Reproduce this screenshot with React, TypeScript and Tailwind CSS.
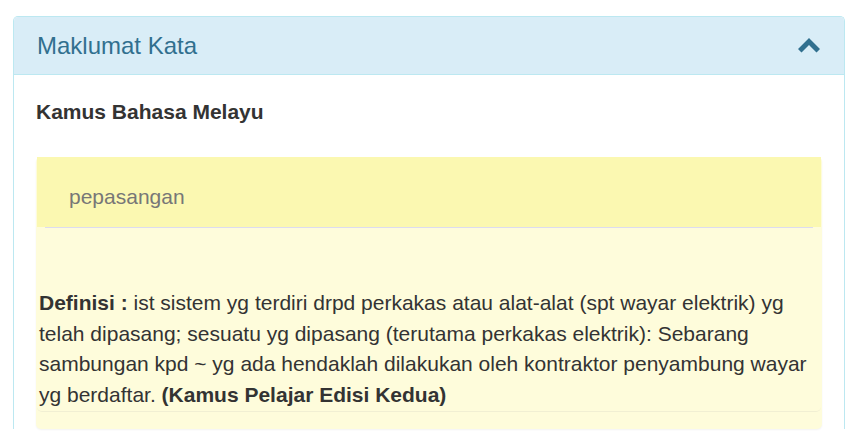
const ChevronUpIcon = () => (
  <svg width="22" height="15" viewBox="0 0 22 15" className="fill-[#31708f]">
    <polygon points="0,11 11,0 22,11 18.5,14.5 11,7 3.5,14.5" />
  </svg>
);

const App = () => {
  return (
    <div className="min-h-screen bg-white pl-[13px] pr-[10px] pt-[16px] font-['Liberation_Sans',Arial,sans-serif] text-[#333333]">
      <div className="rounded-t-[5px] border border-b-0 border-[#bce8f1] bg-white">
        <div className="flex h-[58px] items-center justify-between rounded-t-[4px] border-b border-[#bce8f1] bg-[#d9edf7] pl-[23px] pr-[24px] text-[#31708f]">
          <h3 className="text-[24px] leading-none">Maklumat Kata</h3>
          <ChevronUpIcon />
        </div>

        <div className="px-[22px] pt-[24px]">
          <h4 className="text-[21px] font-bold leading-[26px]">Kamus Bahasa Melayu</h4>

          <div className="mt-[32px] rounded-[5px] bg-[#fefcdb] px-[1px] pb-[17px] shadow-[0_1px_2px_rgba(0,0,0,0.05)]">
            <div className="bg-[#fbf8b1]">
              <div className="flex h-[70px] items-center pl-[32px] pt-[10px] text-[21px] text-[#777777]">pepasangan</div>
            </div>
            <div className="mx-[8px] h-px bg-[#dcdcf0]" />
            <div className="mt-[60px] rounded-b-[5px] border-b border-[#f1efd3] px-[2px] text-[21px] leading-[30.7px]">
              <b>Definisi :</b> ist sistem yg terdiri drpd perkakas atau alat-alat (spt wayar elektrik) yg
              <br />
              telah dipasang; sesuatu yg dipasang (terutama perkakas elektrik): Sebarang
              <br />
              sambungan kpd ~ yg ada hendaklah dilakukan oleh kontraktor penyambung wayar
              <br />
              yg berdaftar. <b>(Kamus Pelajar Edisi Kedua)</b>
            </div>
          </div>
        </div>
      </div>
    </div>
  );
};

export default App;
